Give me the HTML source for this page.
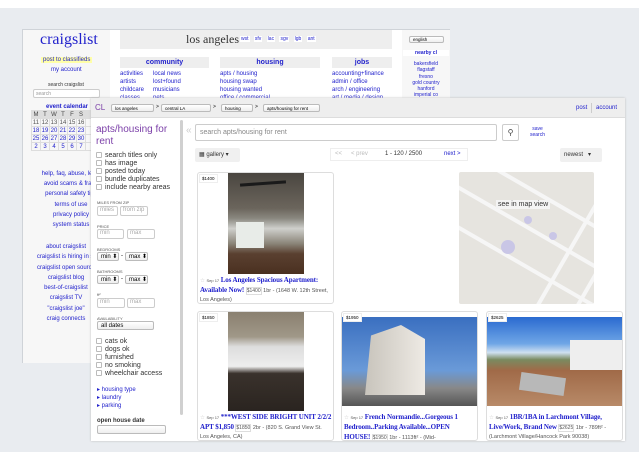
<!DOCTYPE html>
<html><head><meta charset="utf-8"><style>
*{margin:0;padding:0;box-sizing:border-box}
body{width:639px;height:452px;overflow:hidden;background:#e9ecf0;font-family:"Liberation Sans",sans-serif;position:relative}
.a{position:absolute;white-space:nowrap}
.l{color:#2222cc}
.s5{font-size:5px}.s6{font-size:6px}.s7{font-size:7px}
.box{position:absolute;border:1px solid #ccc;background:#fff;border-radius:2px;white-space:nowrap}
.cb{display:inline-block;width:6px;height:6px;border:1px solid #bbb;border-radius:1px;margin-right:3px;vertical-align:-1px;background:#fff}
.cal td{width:9px;height:8px;font-size:6px;text-align:center;border:1px solid #ddd;color:#22c}
.sel{position:absolute;border:1px solid #bbb;border-radius:2px;background:linear-gradient(#fff,#eee);font-size:6px;padding-left:3px;line-height:8px;white-space:nowrap;overflow:hidden}
.card{position:absolute;background:#fff;border:1px solid #ddd;border-radius:3px}
.t{font-family:"Liberation Serif",serif;color:#2222cc;font-size:7px;font-weight:bold;letter-spacing:-0.1px}
.d{position:absolute;line-height:9px;font-size:5.5px;color:#555;white-space:normal;overflow:hidden;height:28px}
</style></head><body>
<div class="a" style="left:0;top:0;width:639px;height:8px;background:#fff"></div>
<!-- back page -->
<div class="a" style="left:22px;top:29px;width:428px;height:334px;background:#fff;border-left:1px solid #cfd3d8;border-top:1px solid #cfd3d8"></div>
<div class="a" style="left:23px;top:30px;width:87px;height:333px;background:#f7f7f7"></div>
<div class="a" style="left:40px;top:31px;font-family:'Liberation Serif',serif;font-size:16px;color:#2222cc">craigslist</div>
<div class="a s6 l" style="left:41px;top:57px;background:#ffffa8;padding:0 2px">post to classifieds</div>
<div class="a s6 l" style="left:51px;top:67px">my account</div>
<div class="a s5" style="left:48px;top:82px;color:#333">search craigslist</div>
<div class="box" style="left:33px;top:89px;width:67px;height:9px;font-size:5px;color:#999;padding-left:2px;line-height:8px">search</div>
<div class="a s6 l" style="left:46px;top:104px;font-weight:bold">event calendar</div>
<table class="cal a" style="left:31px;top:110px;border-collapse:collapse">
<tr style="background:#ddd"><td style="color:#444">M</td><td style="color:#444">T</td><td style="color:#444">W</td><td style="color:#444">T</td><td style="color:#444">F</td><td style="color:#444">S</td><td></td></tr>
<tr><td style="color:#555">11</td><td style="color:#555">12</td><td style="color:#555">13</td><td style="color:#555">14</td><td style="color:#555">15</td><td style="color:#555">16</td><td></td></tr>
<tr><td>18</td><td>19</td><td>20</td><td>21</td><td>22</td><td>23</td><td></td></tr>
<tr><td>25</td><td>26</td><td>27</td><td>28</td><td>29</td><td>30</td><td></td></tr>
<tr><td>2</td><td>3</td><td>4</td><td>5</td><td>6</td><td>7</td><td></td></tr>
</table>
<div class="a s6 l" style="left:36px;top:169px;line-height:10.2px;text-align:center;width:70px;overflow:hidden">help, faq, abuse, legal<br>avoid scams &amp; fraud<br>personal safety tips<br>terms of use<br>privacy policy<br>system status</div>
<div class="a s6 l" style="left:36px;top:242px;line-height:10.3px;text-align:center;width:60px;overflow:hidden">about craigslist<br>craigslist is hiring in sf<br>craigslist open source<br>craigslist blog<br>best-of-craigslist<br>craigslist TV<br>"craigslist joe"<br>craig connects</div>
<div class="a" style="left:120px;top:30px;width:272px;height:19px;background:#eee"></div>
<div class="a" style="left:186px;top:32px;font-family:'Liberation Serif',serif;font-size:12px;color:#333">los angeles</div>
<div class="a s5 l" style="left:240px;top:36px;word-spacing:3px"><span style="background:#fff;padding:0 1px">wst</span> <span style="background:#fff;padding:0 1px">sfv</span> <span style="background:#fff;padding:0 1px">lac</span> <span style="background:#fff;padding:0 1px">sgv</span> <span style="background:#fff;padding:0 1px">lgb</span> <span style="background:#fff;padding:0 1px">ant</span></div>
<div class="a s7 l" style="left:120px;top:57px;width:89px;height:11px;background:#eee;text-align:center;font-weight:bold;line-height:11px">community</div>
<div class="a s7 l" style="left:220px;top:57px;width:100px;height:11px;background:#eee;text-align:center;font-weight:bold;line-height:11px">housing</div>
<div class="a s7 l" style="left:332px;top:57px;width:60px;height:11px;background:#eee;text-align:center;font-weight:bold;line-height:11px">jobs</div>
<div class="a s6 l" style="left:120px;top:70px;line-height:8px">activities<br>artists<br>childcare<br>classes</div>
<div class="a s6 l" style="left:153px;top:70px;line-height:8px">local news<br>lost+found<br>musicians<br>pets</div>
<div class="a s6 l" style="left:220px;top:70px;line-height:8px">apts / housing<br>housing swap<br>housing wanted<br>office / commercial</div>
<div class="a s6 l" style="left:332px;top:70px;line-height:8px">accounting+finance<br>admin / office<br>arch / engineering<br>art / media / design</div>
<div class="a" style="left:402px;top:30px;width:48px;height:68px;background:#f7f7f7"></div>
<div class="sel" style="left:409px;top:36px;width:35px;height:7px;font-size:4.5px;line-height:6px">english</div>
<div class="a s5 l" style="left:403px;top:50px;width:46px;text-align:center;background:#fff;font-weight:bold">nearby cl</div>
<div class="a s5 l" style="left:403px;top:61px;width:46px;text-align:center;line-height:6.3px">bakersfield<br>flagstaff<br>fresno<br>gold country<br>hanford<br>imperial co</div>
<!-- front window -->
<div class="a" style="left:91px;top:98px;width:534px;height:343px;background:#fff;box-shadow:0 0 2px #bbb"></div>
<div class="a" style="left:91px;top:98px;width:534px;height:20px;background:#eee;border-bottom:1px solid #ddd"></div>
<div class="a" style="left:95px;top:103px;font-size:8px;color:#7b3fa8">CL</div>
<div class="sel" style="left:111px;top:104px;width:43px;height:8px;font-size:4.5px;line-height:7px">los angeles</div>
<div class="a s5" style="left:156px;top:104px">&gt;</div>
<div class="sel" style="left:161px;top:104px;width:50px;height:8px;font-size:4.5px;line-height:7px">central LA</div>
<div class="a s5" style="left:213px;top:104px">&gt;</div>
<div class="sel" style="left:221px;top:104px;width:32px;height:8px;font-size:4.5px;line-height:7px">housing</div>
<div class="a s5" style="left:255px;top:104px">&gt;</div>
<div class="sel" style="left:263px;top:104px;width:57px;height:8px;font-size:4.5px;line-height:7px">apts/housing for rent</div>
<div class="a s6 l" style="left:576px;top:105px">post</div>
<div class="a" style="left:591px;top:103px;width:1px;height:10px;background:#ccc"></div>
<div class="a s6 l" style="left:596px;top:105px">account</div>
<!-- sidebar -->
<div class="a" style="left:96px;top:124px;font-size:10px;color:#7b3fa8;line-height:12px">apts/housing for<br>rent</div>
<div class="a s7" style="left:96px;top:152px;line-height:8px;color:#333"><span class="cb"></span>search titles only<br><span class="cb"></span>has image<br><span class="cb"></span>posted today<br><span class="cb"></span>bundle duplicates<br><span class="cb"></span>include nearby areas</div>
<div class="a" style="left:97px;top:200px;font-size:4px;color:#555">MILES FROM ZIP</div>
<div class="box" style="left:97px;top:206px;width:21px;height:10px;font-size:6px;color:#aaa;padding-left:2px">miles</div>
<div class="box" style="left:120px;top:206px;width:28px;height:10px;font-size:6px;color:#aaa;padding-left:2px">from zip</div>
<div class="a" style="left:97px;top:224px;font-size:4px;color:#555">PRICE</div>
<div class="box" style="left:97px;top:229px;width:27px;height:10px;font-size:6px;color:#aaa;padding-left:2px">min</div>
<div class="box" style="left:127px;top:229px;width:28px;height:10px;font-size:6px;color:#aaa;padding-left:2px">max</div>
<div class="a" style="left:97px;top:247px;font-size:4px;color:#555">BEDROOMS</div>
<div class="sel" style="left:97px;top:252px;width:22px;height:9px;font-size:6px">min ⬍</div>
<div class="a s6" style="left:121px;top:253px">-</div>
<div class="sel" style="left:125px;top:252px;width:23px;height:9px;font-size:6px">max ⬍</div>
<div class="a" style="left:97px;top:269px;font-size:4px;color:#555">BATHROOMS</div>
<div class="sel" style="left:97px;top:275px;width:22px;height:9px;font-size:6px">min ⬍</div>
<div class="a s6" style="left:121px;top:276px">-</div>
<div class="sel" style="left:125px;top:275px;width:23px;height:9px;font-size:6px">max ⬍</div>
<div class="a" style="left:97px;top:292px;font-size:4px;color:#555">ft²</div>
<div class="box" style="left:97px;top:298px;width:28px;height:10px;font-size:6px;color:#aaa;padding-left:2px">min</div>
<div class="box" style="left:127px;top:298px;width:28px;height:10px;font-size:6px;color:#aaa;padding-left:2px">max</div>
<div class="a" style="left:97px;top:316px;font-size:4px;color:#555">AVAILABILITY</div>
<div class="sel" style="left:97px;top:321px;width:57px;height:9px;font-size:6px">all dates</div>
<div class="a s7" style="left:96px;top:338px;line-height:8px;color:#333"><span class="cb"></span>cats ok<br><span class="cb"></span>dogs ok<br><span class="cb"></span>furnished<br><span class="cb"></span>no smoking<br><span class="cb"></span>wheelchair access</div>
<div class="a s6 l" style="left:97px;top:387px;line-height:7.8px">▸ housing type<br>▸ laundry<br>▸ parking</div>
<div class="a s6" style="left:97px;top:418px;color:#333;font-weight:bold">open house date</div>
<div class="sel" style="left:97px;top:425px;width:69px;height:9px"></div>
<div class="a" style="left:180px;top:120px;width:3px;height:295px;background:#d0d0d0;border-radius:2px"></div>
<!-- main -->
<div class="a" style="left:186px;top:125px;font-size:10px;color:#ccc">«</div>
<div class="box" style="left:195px;top:124px;width:302px;height:17px;font-size:7px;color:#888;padding:4px 0 0 4px">search apts/housing for rent</div>
<div class="box" style="left:502px;top:124px;width:17px;height:17px;font-size:8px;text-align:center;line-height:15px;color:#444">⚲</div>
<div class="a s5 l" style="left:530px;top:126px;text-align:center;line-height:6px">save<br>search</div>
<div class="a" style="left:195px;top:148px;width:45px;height:14px;background:#f0f0f0;border-radius:2px;font-size:6px;line-height:14px;padding-left:4px;color:#333">▦ gallery ▾</div>
<div class="a" style="left:330px;top:148px;width:138px;height:13px;border:1px solid #eee;font-size:6px;line-height:11px;color:#bbb">
<span style="position:absolute;left:4px">&lt;&lt;</span><span style="position:absolute;left:20px">&lt; prev</span><span style="position:absolute;left:54px;color:#333">1 - 120 / 2500</span><span style="position:absolute;left:113px;color:#22c">next &gt;</span></div>
<div class="a" style="left:560px;top:148px;width:42px;height:14px;background:#f0f0f0;border-radius:2px;font-size:6px;line-height:14px;padding-left:4px;color:#333">newest &nbsp;&nbsp;▾</div>
<!-- card 1 -->
<div class="card" style="left:197px;top:172px;width:137px;height:132px"></div>
<div class="a" style="left:228px;top:173px;width:76px;height:101px;background:linear-gradient(#4a4640 0%,#6b655c 35%,#8a8880 45%,#cfd0cc 55%,#8a8478 70%,#5a4030 80%,#4a3020 100%)"></div>
<div class="a" style="left:240px;top:182px;width:46px;height:3px;background:#1a1a1a;transform:rotate(-4deg)"></div>
<div class="a" style="left:236px;top:222px;width:28px;height:26px;background:#e8ece8"></div>
<div class="a" style="left:199px;top:174px;font-size:4.5px;background:#fff;border:1px solid #eee;padding:1px 2px">$1400</div>
<div class="d" style="left:200px;top:276px;width:132px"><span style="color:#ccc">☆</span> <span style="font-size:4px">Sep 17</span> <span class="t">Los Angeles Spacious Apartment: Available Now!</span> <span style="border:1px solid #ddd;font-size:5px">$1400</span> 1br - (1648 W. 12th Street, Los Angeles)</div>
<!-- map -->
<div class="a" style="left:459px;top:172px;width:135px;height:132px;background:#e6e4df;border-radius:2px;overflow:hidden">
<div class="a" style="left:-20px;top:20px;width:200px;height:4px;background:#f6f6f6;transform:rotate(30deg)"></div>
<div class="a" style="left:-20px;top:60px;width:200px;height:4px;background:#f6f6f6;transform:rotate(30deg)"></div>
<div class="a" style="left:-20px;top:100px;width:200px;height:4px;background:#f6f6f6;transform:rotate(30deg)"></div>
<div class="a" style="left:20px;top:60px;width:200px;height:4px;background:#f6f6f6;transform:rotate(-60deg)"></div>
<div class="a" style="left:60px;top:60px;width:200px;height:4px;background:#f6f6f6;transform:rotate(-60deg)"></div>
<div class="a" style="left:37px;top:28px;font-size:7px;background:#f4f4f4;padding:1px 2px;color:#333">see in map view</div>
<div class="a" style="left:42px;top:68px;width:14px;height:14px;border-radius:50%;background:#c9c6e6"></div>
<div class="a" style="left:65px;top:44px;width:8px;height:8px;border-radius:50%;background:#c9c6e6"></div>
<div class="a" style="left:90px;top:60px;width:8px;height:8px;border-radius:50%;background:#c9c6e6"></div>
</div>
<!-- row 2 -->
<div class="card" style="left:197px;top:311px;width:137px;height:130px"></div>
<div class="a" style="left:228px;top:312px;width:76px;height:99px;background:linear-gradient(#8a8070 0%,#a09888 25%,#ddd 35%,#eee 55%,#3a322c 62%,#2a2420 100%)"></div>
<div class="a" style="left:199px;top:313px;font-size:4.5px;background:#fff;border:1px solid #eee;padding:1px 2px">$1850</div>
<div class="d" style="left:200px;top:413px;width:132px"><span style="color:#ccc">☆</span> <span style="font-size:4px">Sep 17</span> <span class="t">***WEST SIDE BRIGHT UNIT 2/2/2 APT $1,850</span> <span style="border:1px solid #ddd;font-size:5px">$1850</span> 2br - (820 S. Grand View St. Los Angeles, CA)</div>
<div class="card" style="left:341px;top:311px;width:137px;height:130px"></div>
<div class="a" style="left:342px;top:317px;width:135px;height:89px;background:linear-gradient(#3a6fc0,#6a9ad8 60%,#888 80%,#555)"></div>
<div class="a" style="left:365px;top:325px;width:60px;height:70px;background:linear-gradient(90deg,#c8c4bc,#eeeae4);clip-path:polygon(10% 15%,60% 0,100% 20%,100% 100%,0 100%)"></div>
<div class="a" style="left:343px;top:313px;font-size:4.5px;background:#fff;border:1px solid #eee;padding:1px 2px">$1950</div>
<div class="d" style="left:344px;top:413px;width:132px"><span style="color:#ccc">☆</span> <span style="font-size:4px">Sep 17</span> <span class="t">French Normandie...Gorgeous 1 Bedroom..Parking Available...OPEN HOUSE!</span> <span style="border:1px solid #ddd;font-size:5px">$1950</span> 1br - 1113ft² - (Mid-</div>
<div class="card" style="left:486px;top:311px;width:137px;height:130px"></div>
<div class="a" style="left:487px;top:317px;width:135px;height:89px;background:linear-gradient(#2a6ad0 0%,#6fa6e6 30%,#cfe0f0 40%,#7a8a60 48%,#a06a48 60%,#b88a68 100%)"></div>
<div class="a" style="left:570px;top:340px;width:52px;height:30px;background:#eee"></div>
<div class="a" style="left:520px;top:375px;width:45px;height:18px;background:#b8b8b8;transform:rotate(8deg)"></div>
<div class="a" style="left:488px;top:313px;font-size:4.5px;background:#fff;border:1px solid #eee;padding:1px 2px">$2625</div>
<div class="d" style="left:489px;top:413px;width:133px"><span style="color:#ccc">☆</span> <span style="font-size:4px">Sep 17</span> <span class="t">1BR/1BA in Larchmont Village, Live/Work, Brand New</span> <span style="border:1px solid #ddd;font-size:5px">$2625</span> 1br - 789ft² - (Larchmont Village/Hancock Park 90038)</div>
</body></html>
